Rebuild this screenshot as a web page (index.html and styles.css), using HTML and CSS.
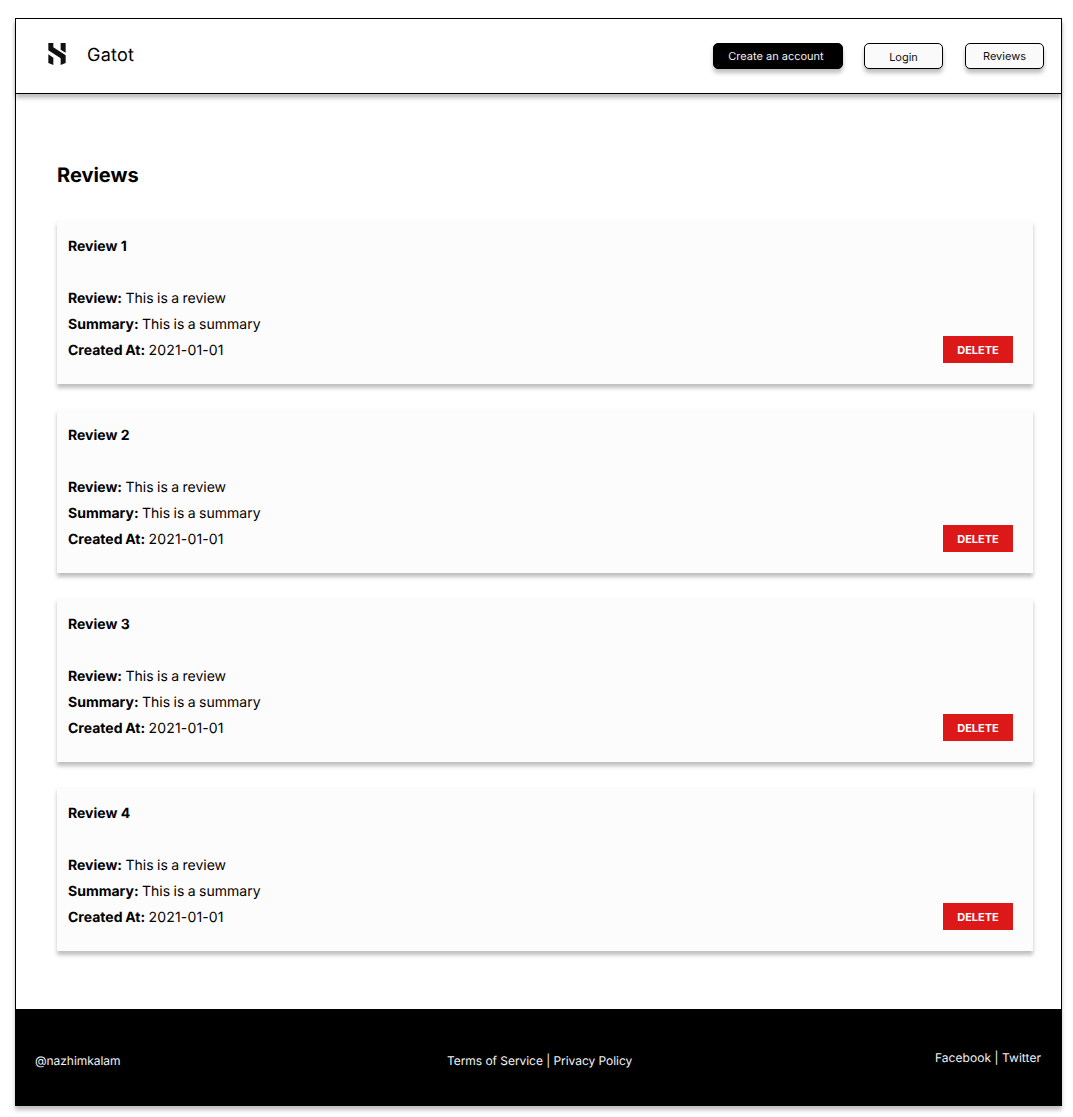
FILE: index.html
```html
<!DOCTYPE html>
<html lang="en">
<head>
<meta charset="utf-8">
<title>Gatot - Reviews</title>
<link rel="stylesheet" href="styles.css">
</head>
<body>
<div class="page">
  <header class="header">
    <a class="brand">
      <svg class="logo" viewBox="0 0 54 66" aria-hidden="true">
        <path d="M1 0H16V13L53 37V60L38 66V46L1 22ZM38 0H53V29L38 20ZM1 34L16 44V66L1 60Z"/>
      </svg>
      <span class="brand-name">Gatot</span>
    </a>
    <nav class="nav">
      <a class="button button-primary">Create an account</a>
      <a class="button button-login">Login</a>
      <a class="button">Reviews</a>
    </nav>
  </header>
  <main class="main">
    <h1 class="title">Reviews</h1>
    <div class="reviews">
      <article class="card">
        <div class="details">
          <h2 class="card-title">Review 1</h2>
          <p><b>Review:</b> This is a review</p>
          <p><b>Summary:</b> This is a summary</p>
          <p><b>Created At:</b> <span class="date">2021-01-01</span></p>
        </div>
        <button class="delete">DELETE</button>
      </article>
      <article class="card">
        <div class="details">
          <h2 class="card-title">Review 2</h2>
          <p><b>Review:</b> This is a review</p>
          <p><b>Summary:</b> This is a summary</p>
          <p><b>Created At:</b> <span class="date">2021-01-01</span></p>
        </div>
        <button class="delete">DELETE</button>
      </article>
      <article class="card">
        <div class="details">
          <h2 class="card-title">Review 3</h2>
          <p><b>Review:</b> This is a review</p>
          <p><b>Summary:</b> This is a summary</p>
          <p><b>Created At:</b> <span class="date">2021-01-01</span></p>
        </div>
        <button class="delete">DELETE</button>
      </article>
      <article class="card">
        <div class="details">
          <h2 class="card-title">Review 4</h2>
          <p><b>Review:</b> This is a review</p>
          <p><b>Summary:</b> This is a summary</p>
          <p><b>Created At:</b> <span class="date">2021-01-01</span></p>
        </div>
        <button class="delete">DELETE</button>
      </article>
    </div>
  </main>
  <footer class="footer">
    <span>@nazhimkalam</span>
    <span class="legal">Terms of Service | Privacy Policy</span>
    <span class="social">Facebook | Twitter</span>
  </footer>
</div>
</body>
</html>
```
FILE: styles.css
```css
* {
  box-sizing: border-box;
}

body {
  margin: 0;
  padding: 18px 11px 11px 15px;
  background: #fff;
  color: #000;
  font-family: Inter, "Liberation Sans", sans-serif;
  font-weight: 400;
  text-rendering: geometricPrecision;
}

.page {
  display: flex;
  flex-direction: column;
  height: 1088px;
  border: 1px solid #000;
  box-shadow: 0 4px 4px rgba(0, 0, 0, 0.25);
  background: #fff;
}

.header {
  display: flex;
  justify-content: space-between;
  height: 75px;
  padding: 24px 17px 0 32px;
  border-bottom: 1px solid #000;
  box-shadow: 0 4px 4px rgba(0, 0, 0, 0.25);
}

.brand {
  display: flex;
  align-items: flex-start;
  gap: 21px;
}

.logo {
  width: 18px;
  height: 22px;
  fill: #111;
}

.brand-name {
  font-size: 18px;
  line-height: 26px;
  letter-spacing: 0.25px;
}

.nav {
  display: flex;
  align-items: flex-start;
}

.button {
  width: 79px;
  height: 26px;
  margin-left: 22px;
  border: 1px solid #000;
  border-radius: 5px;
  background: #fafafa;
  box-shadow: 0 4px 4px rgba(0, 0, 0, 0.25);
  color: #111;
  font-size: 11px;
  line-height: 24px;
  text-align: center;
}

.button-primary {
  width: 130px;
  padding-right: 4px;
  background: #000;
  color: #f2f2f2;
}

.button-login {
  margin-left: 21px;
  line-height: 26px;
}

.main {
  flex: 1;
  padding: 68px 28px 0 41px;
}

.title {
  margin: 0 0 32px;
  font-size: 20px;
  line-height: 26px;
  font-weight: 700;
}

.reviews {
  display: flex;
  flex-direction: column;
  gap: 25px;
}

.card {
  display: flex;
  justify-content: space-between;
  align-items: flex-start;
  height: 164px;
  padding: 13px 20px 0 11px;
  background: #fcfcfc;
  box-shadow: 0 4px 4px rgba(0, 0, 0, 0.25);
}

.details {
  margin-top: 1px;
  font-size: 14px;
  line-height: 26px;
  word-spacing: -0.5px;
}

.details p {
  margin: 0;
}

.details b {
  font-weight: 700;
}

.date {
  letter-spacing: 0.15px;
}

.card-title {
  margin: 0 0 26px;
  font-size: 14px;
  font-weight: 700;
  word-spacing: 0;
}

.delete {
  width: 70px;
  height: 27px;
  margin-top: 103px;
  padding: 0;
  border: 0;
  background: #dc1818;
  color: #fff;
  font: 700 11px Inter, "Liberation Sans", sans-serif;
}

.footer {
  display: grid;
  grid-template-columns: 412px 1fr auto;
  height: 96px;
  padding: 43px 20px 0 19px;
  background: #000;
  color: #f2f2f2;
  font-size: 12px;
  line-height: 18px;
  letter-spacing: -0.05px;
}

.social {
  margin-top: -3px;
  letter-spacing: 0.05px;
}
```
